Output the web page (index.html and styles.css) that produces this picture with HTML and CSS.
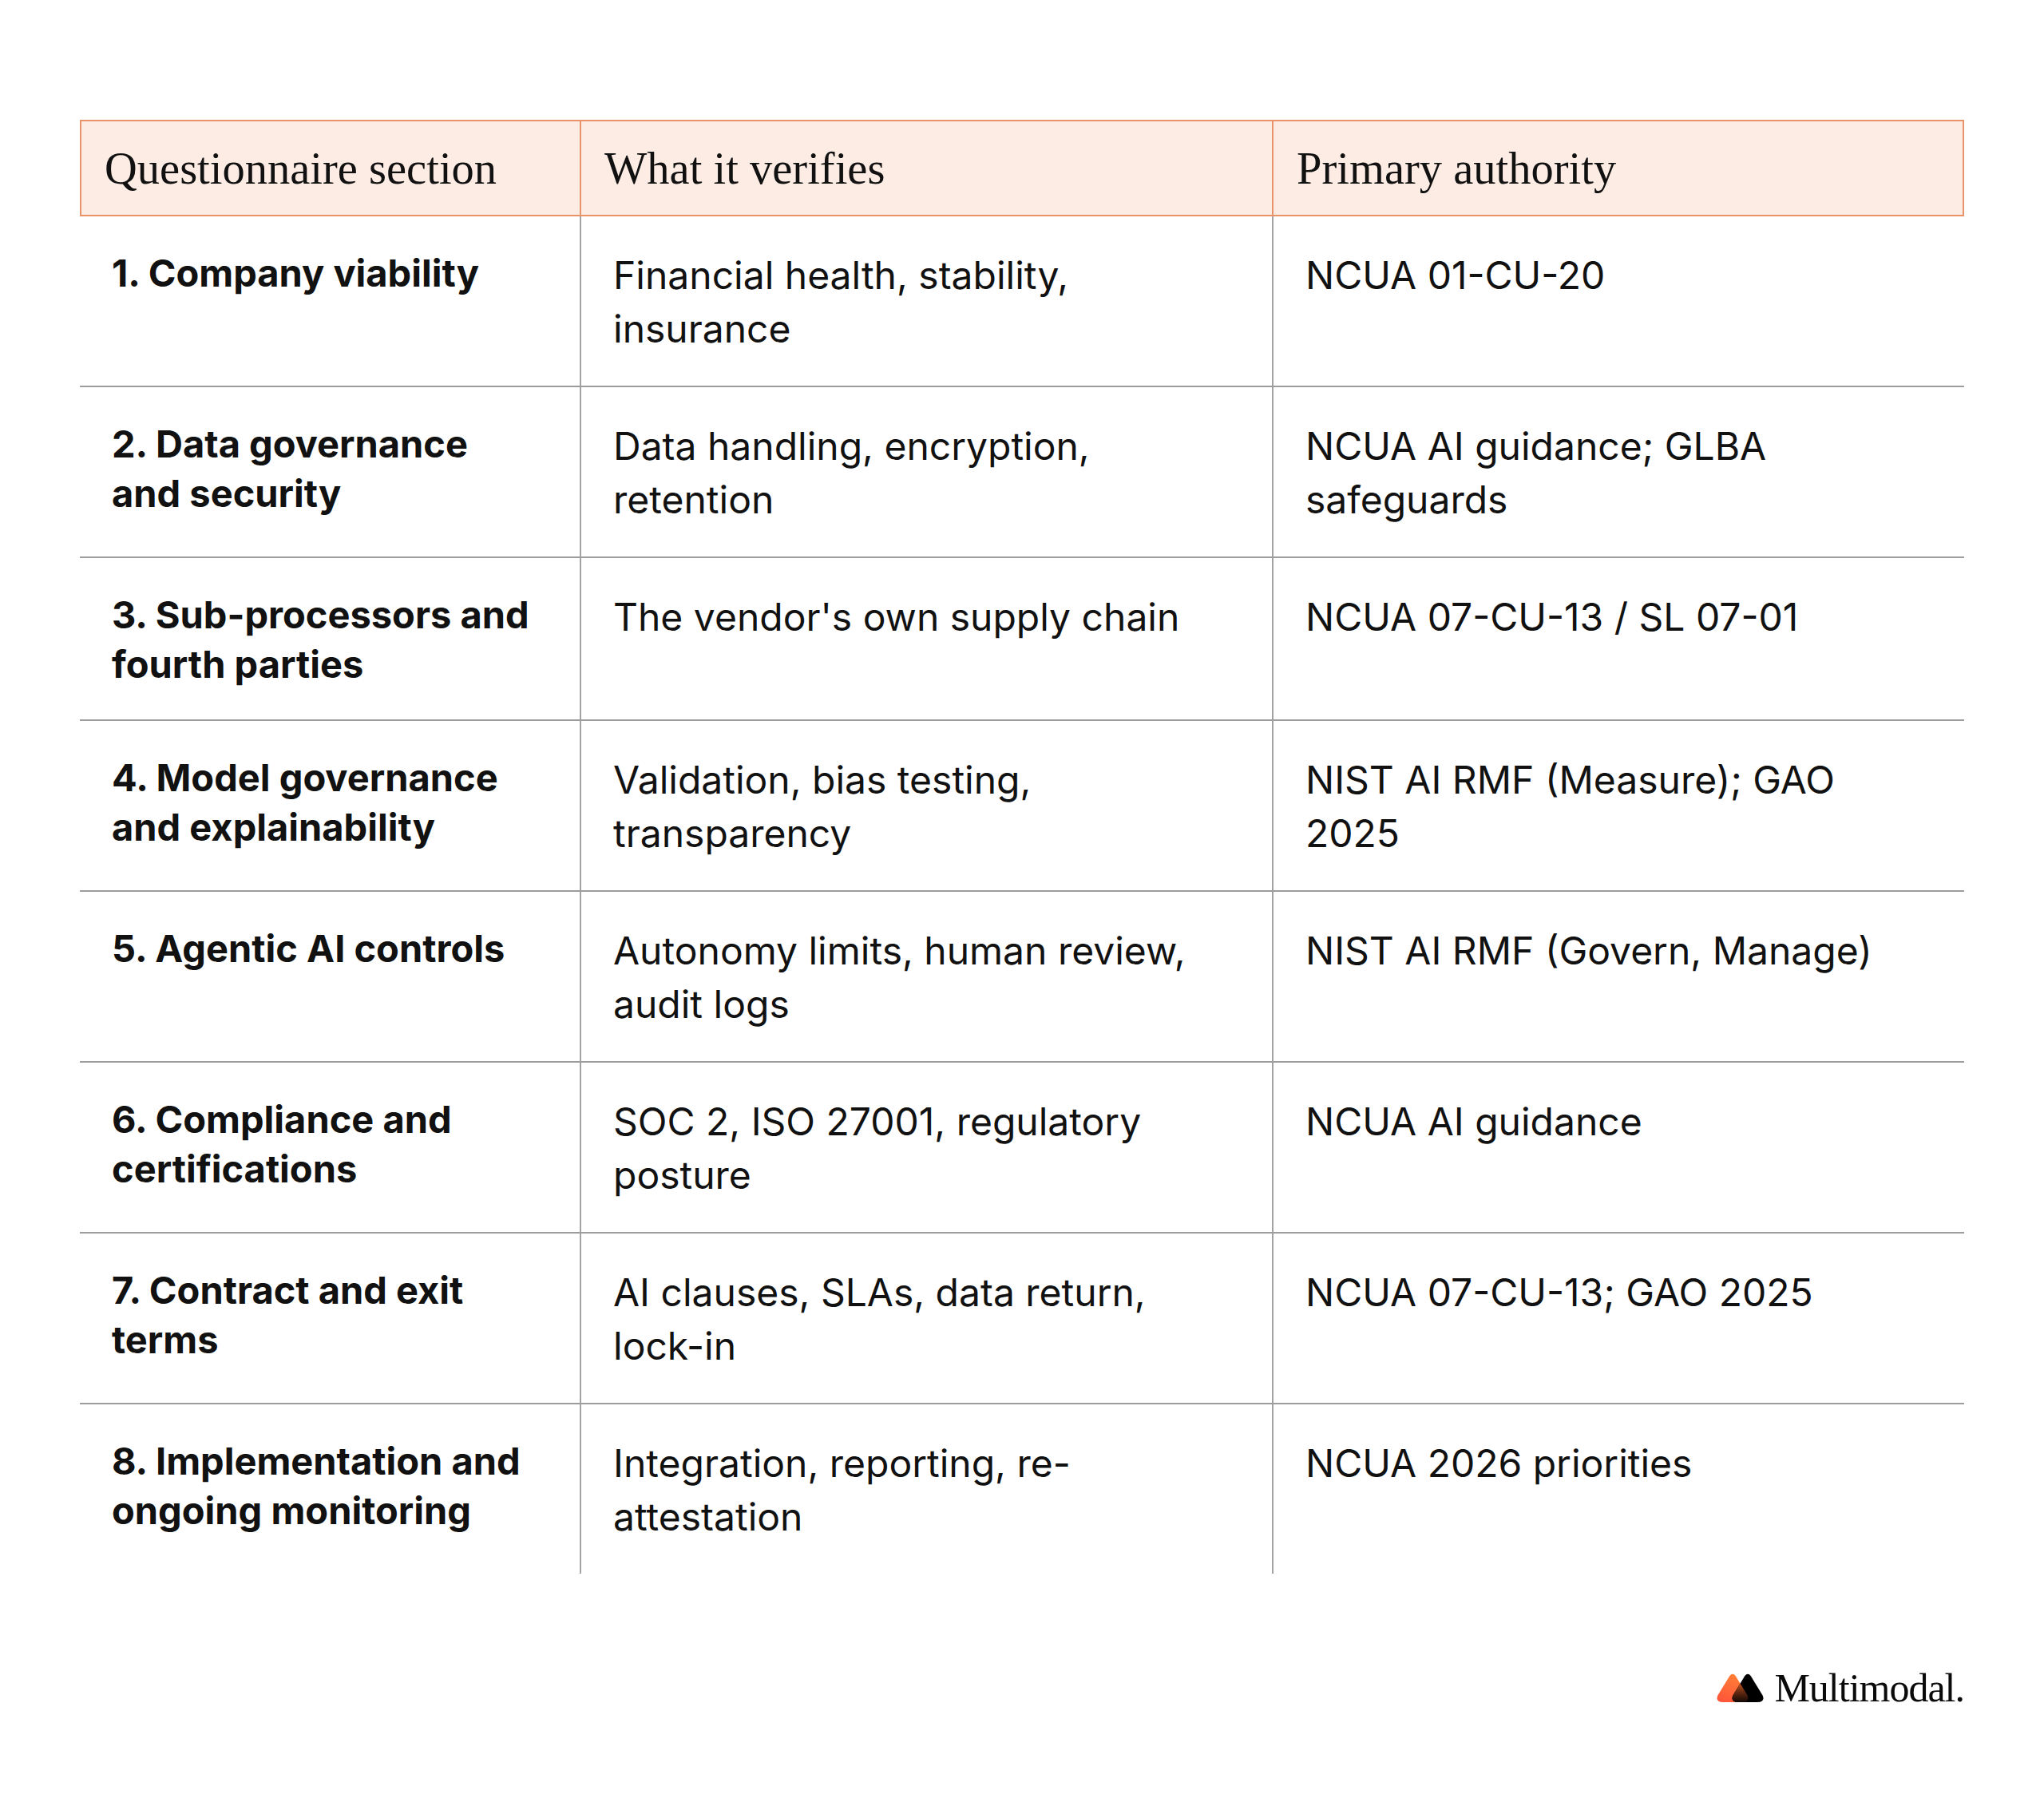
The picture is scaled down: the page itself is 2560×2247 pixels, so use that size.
FILE: index.html
```html
<!DOCTYPE html>
<html lang="en">
<head>
<meta charset="utf-8">
<title>Questionnaire sections</title>
<link rel="stylesheet" href="styles.css">
</head>
<body>
<main class="page">
  <div class="table">
    <div class="row head">
      <div class="cell">Questionnaire section</div>
      <div class="cell">What it verifies</div>
      <div class="cell">Primary authority</div>
    </div>
    <div class="row">
      <div class="cell name">1. Company viability</div>
      <div class="cell">Financial health, stability, insurance</div>
      <div class="cell">NCUA 01-CU-20</div>
    </div>
    <div class="row">
      <div class="cell name">2. Data governance and security</div>
      <div class="cell">Data handling, encryption, retention</div>
      <div class="cell">NCUA AI guidance; GLBA safeguards</div>
    </div>
    <div class="row">
      <div class="cell name">3. Sub-processors and fourth parties</div>
      <div class="cell">The vendor's own supply chain</div>
      <div class="cell">NCUA 07-CU-13 / SL 07-01</div>
    </div>
    <div class="row">
      <div class="cell name">4. Model governance and explainability</div>
      <div class="cell">Validation, bias testing, transparency</div>
      <div class="cell">NIST AI RMF (Measure); GAO 2025</div>
    </div>
    <div class="row">
      <div class="cell name">5. Agentic AI controls</div>
      <div class="cell">Autonomy limits, human review, audit logs</div>
      <div class="cell">NIST AI RMF (Govern, Manage)</div>
    </div>
    <div class="row">
      <div class="cell name">6. Compliance and certifications</div>
      <div class="cell">SOC 2, ISO 27001, regulatory posture</div>
      <div class="cell">NCUA AI guidance</div>
    </div>
    <div class="row">
      <div class="cell name">7. Contract and exit terms</div>
      <div class="cell">AI clauses, SLAs, data return, lock-in</div>
      <div class="cell">NCUA 07-CU-13; GAO 2025</div>
    </div>
    <div class="row last">
      <div class="cell name">8. Implementation and ongoing monitoring</div>
      <div class="cell">Integration, reporting, re-attestation</div>
      <div class="cell">NCUA 2026 priorities</div>
    </div>
  </div>

  <footer class="brand">
    <svg class="logo" viewBox="0 0 60 36" width="60" height="36" aria-hidden="true">
      <defs>
        <linearGradient id="gOrange" x1="0.6" y1="0" x2="0.2" y2="1">
          <stop offset="0" stop-color="#ff7f36"/>
          <stop offset="1" stop-color="#ff553a"/>
        </linearGradient>
        <linearGradient id="gMix" x1="0" y1="0" x2="0" y2="1">
          <stop offset="0.2" stop-color="#e8692f"/>
          <stop offset="0.62" stop-color="#6a2c12"/>
          <stop offset="1" stop-color="#120804"/>
        </linearGradient>
        <clipPath id="clipLeft">
          <path d="M16.2 3.2 Q20 -1.5 23.8 3.2 L38.6 27.5 Q42 36 32 36 L8 36 Q-2 36 1.4 27.5 Z"/>
        </clipPath>
      </defs>
      <path d="M16.2 3.2 Q20 -1.5 23.8 3.2 L38.6 27.5 Q42 36 32 36 L8 36 Q-2 36 1.4 27.5 Z" fill="url(#gOrange)"/>
      <path d="M35.2 3.2 Q39 -1.5 42.8 3.2 L57.6 27.5 Q61 36 51 36 L27 36 Q17 36 20.4 27.5 Z" fill="#000000"/>
      <g clip-path="url(#clipLeft)">
        <path d="M35.2 3.2 Q39 -1.5 42.8 3.2 L57.6 27.5 Q61 36 51 36 L27 36 Q17 36 20.4 27.5 Z" fill="url(#gMix)"/>
      </g>
    </svg>
    <span class="brand-name">Multimodal.</span>
  </footer>
</main>
</body>
</html>
```

FILE: styles.css
```css
html, body {
  margin: 0;
  padding: 0;
  background: #ffffff;
}

.page {
  box-sizing: border-box;
  width: 2560px;
  min-height: 2247px;
  padding: 150px 100px 0 100px;
  display: flex;
  flex-direction: column;
}

.table {
  width: 2360px;
  display: flex;
  flex-direction: column;
}

.row {
  display: grid;
  grid-template-columns: 626px 867px 867px;
  border-bottom: 2px solid #9d9d9d;
}

.row.last {
  border-bottom: none;
}

.cell {
  box-sizing: border-box;
  padding: 40px 80px 38px 40px;
  font-family: Inter, "Noto Sans", sans-serif;
  font-size: 48px;
  line-height: 67px;
  color: #111111;
}

.cell + .cell {
  border-left: 2px solid #a3a3a3;
}

.cell.name {
  font-weight: 700;
  font-size: 47px;
  line-height: 62px;
  padding-right: 56px;
}

.row.head {
  background: #fdece3;
  border: 2px solid #e8936a;
  height: 121px;
  box-sizing: border-box;
  grid-template-columns: 624px 867px 865px;
}

.row.head .cell {
  font-family: "Liberation Serif", "Times New Roman", serif;
  font-size: 56.5px;
  line-height: 62px;
  font-weight: 400;
  color: #111111;
  padding: 0 20px 0 29px;
  display: flex;
  align-items: center;
}

.row.head .cell + .cell {
  border-left: 2px solid #e8936a;
}

.brand {
  margin-top: 118px;
  display: flex;
  justify-content: flex-end;
  align-items: center;
  gap: 12px;
}

.logo {
  display: block;
}

.brand-name {
  font-family: "Liberation Serif", "Times New Roman", serif;
  font-size: 50px;
  line-height: 50px;
  color: #0a0a0a;
  letter-spacing: -1px;
}
```
